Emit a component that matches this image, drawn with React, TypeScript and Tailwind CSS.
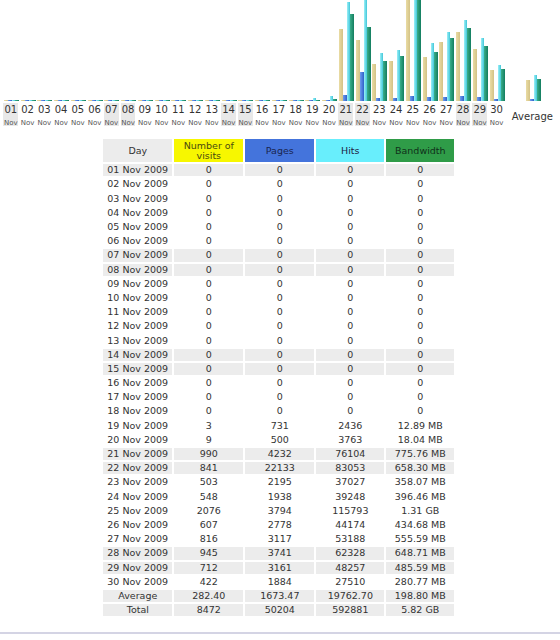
import React from "react";

type Day = {
  d: number;
  visits: number;
  pages: number;
  hits: number;
  bw: number; // MB
  bwLabel: string;
};

const raw: [number, number, number, number, string][] = [
  [3, 731, 2436, 12.89, "12.89 MB"],
  [9, 500, 3763, 18.04, "18.04 MB"],
  [990, 4232, 76104, 775.76, "775.76 MB"],
  [841, 22133, 83053, 658.3, "658.30 MB"],
  [503, 2195, 37027, 358.07, "358.07 MB"],
  [548, 1938, 39248, 396.46, "396.46 MB"],
  [2076, 3794, 115793, 1341.44, "1.31 GB"],
  [607, 2778, 44174, 434.68, "434.68 MB"],
  [816, 3117, 53188, 555.59, "555.59 MB"],
  [945, 3741, 62328, 648.71, "648.71 MB"],
  [712, 3161, 48257, 485.59, "485.59 MB"],
  [422, 1884, 27510, 280.77, "280.77 MB"],
];

const days: Day[] = Array.from({ length: 30 }, (_, i) => {
  const d = i + 1;
  if (d < 19) return { d, visits: 0, pages: 0, hits: 0, bw: 0, bwLabel: "0" };
  const r = raw[d - 19];
  return { d, visits: r[0], pages: r[1], hits: r[2], bw: r[3], bwLabel: r[4] };
});

const weekend = [1, 7, 8, 14, 15, 21, 22, 28, 29];

const MAX_H = 151;
const maxVisits = 2076;
const maxHits = 115793;
const maxBw = 1341.44;

const h = (v: number, max: number) => Math.max(1, Math.round((v / max) * MAX_H));

const pad = (n: number) => (n < 10 ? "0" + n : String(n));

const Bars = ({ visits, pages, hits, bw }: { visits: number; pages: number; hits: number; bw: number }) => (
  <div className="flex items-end">
    <div className="w-[4px] bg-[linear-gradient(90deg,#eadcA4,#d3c286)]" style={{ height: h(visits, maxVisits) }} />
    <div className="w-[4px] bg-[linear-gradient(90deg,#6f9cf0,#2f5fc8)]" style={{ height: h(pages, maxHits) }} />
    <div className="w-[3px] bg-[linear-gradient(90deg,#9af0f8,#43c6d8)]" style={{ height: h(hits, maxHits) }} />
    <div className="w-[4px] bg-[linear-gradient(90deg,#3aae8a,#137d5f)]" style={{ height: h(bw, maxBw) }} />
  </div>
);

export default function App() {
  return (
    <div className="w-[560px] h-[640px] bg-white overflow-hidden font-['DejaVu_Sans',Verdana,sans-serif] text-[#333]">
      {/* chart */}
      <div className="flex pl-[2.4px]">
        {days.map((day) => (
          <div key={day.d} className="w-[16.75px] flex flex-col">
            <div className="h-[101px] overflow-hidden flex items-end pl-[1.5px]">
              <Bars visits={day.visits} pages={day.pages} hits={day.hits} bw={day.bw} />
            </div>
            <div
              className={
                "mt-[2px] mx-[1px] h-[23px] pt-[1px] flex flex-col items-center " +
                (weekend.includes(day.d) ? "bg-[#e8e8e8]" : "")
              }
            >
              <span className="text-[10px] leading-[12px]">{pad(day.d)}</span>
              <span className="text-[7px] leading-[8px] mt-[3px] text-[#555]">Nov</span>
            </div>
          </div>
        ))}
        <div className="w-[55px] flex flex-col">
          <div className="h-[101px] flex items-end justify-center pl-[2px]">
            <Bars visits={282.4} pages={1673.47} hits={19762.7} bw={198.8} />
          </div>
          <div className="mt-[2px] h-[23px] pt-[3px] flex items-center justify-center text-[10px]">Average</div>
        </div>
      </div>

      {/* table */}
      <div className="mt-[13px] ml-[103.3px] w-[351px] grid grid-cols-[69px_69px_69px_68px_68px] grid-rows-[23.3px] gap-x-[2px] gap-y-[2px] auto-rows-[12.2px] text-[9.5px] leading-[12px]">
        <div className="bg-[#ececec] flex items-center justify-center">Day</div>
        <div className="bg-[#f7f700] flex items-center justify-center text-center leading-[10px] text-[#4a4a10]">
          Number of
          <br />
          visits
        </div>
        <div className="bg-[#4474dc] flex items-center justify-center text-[#1a2550]">Pages</div>
        <div className="bg-[#68eefc] flex items-center justify-center text-[#224]">Hits</div>
        <div className="bg-[#2f9c48] flex items-center justify-center text-[#10301a]">Bandwidth</div>
        {days.map((day) => {
          const bg = weekend.includes(day.d) ? "bg-[#ececec]" : "bg-white";
          return (
            <React.Fragment key={day.d}>
              <div className={bg + " pl-[4px]"}>{pad(day.d)} Nov 2009</div>
              <div className={bg + " text-center"}>{day.visits}</div>
              <div className={bg + " text-center"}>{day.pages}</div>
              <div className={bg + " text-center"}>{day.hits}</div>
              <div className={bg + " text-center"}>{day.bwLabel}</div>
            </React.Fragment>
          );
        })}
        <div className="bg-[#ececec] text-center">Average</div>
        <div className="bg-[#ececec] text-center">282.40</div>
        <div className="bg-[#ececec] text-center">1673.47</div>
        <div className="bg-[#ececec] text-center">19762.70</div>
        <div className="bg-[#ececec] text-center">198.80 MB</div>
        <div className="bg-[#ececec] text-center">Total</div>
        <div className="bg-[#ececec] text-center">8472</div>
        <div className="bg-[#ececec] text-center">50204</div>
        <div className="bg-[#ececec] text-center">592881</div>
        <div className="bg-[#ececec] text-center">5.82 GB</div>
      </div>

      <div className="mt-[16px] h-[2px] bg-[#d4d4e4]" />
    </div>
  );
}
